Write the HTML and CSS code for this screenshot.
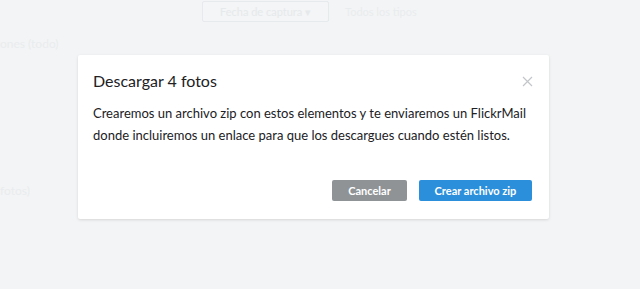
FILE: index.html
```html
<!DOCTYPE html>
<html lang="es">
<head>
  <meta charset="UTF-8">
  <title>Descargar fotos</title>
  <link rel="stylesheet" href="styles.css">
</head>
<body>
  <div class="backdrop">
    <div class="toolbar">
      <button class="filter">Fecha de captura ▾</button>
      <span class="filter-link">Todos los tipos</span>
    </div>
    <div class="side side-top">ones (todo)</div>
    <div class="side side-bottom">fotos)</div>
  </div>

  <div class="modal">
    <div class="modal-head">
      <h2>Descargar 4 fotos</h2>
      <span class="close">
        <svg width="11" height="11" viewBox="0 0 11 11"><path d="M1 1L10 10M10 1L1 10" stroke="#c3c6c9" stroke-width="1.2"/></svg>
      </span>
    </div>
    <p class="modal-text">Crearemos un archivo zip con estos elementos y te enviaremos un FlickrMail donde incluiremos un enlace para que los descargues cuando estén listos.</p>
    <div class="modal-actions">
      <button class="btn btn-cancel">Cancelar</button>
      <button class="btn btn-primary">Crear archivo zip</button>
    </div>
  </div>
</body>
</html>
```

FILE: styles.css
```css
* {
  box-sizing: border-box;
}

body {
  margin: 0;
  width: 640px;
  height: 289px;
  overflow: hidden;
  background: #f3f4f5;
  font-family: 'Lato', 'Liberation Sans', sans-serif;
  position: relative;
}

.backdrop {
  color: #e9ecee;
  font-size: 12px;
}

.toolbar {
  display: flex;
  align-items: center;
  padding: 1px 0 0 202px;
  gap: 16px;
}

.filter {
  width: 127px;
  height: 21px;
  border: 1px solid #e6eaec;
  border-radius: 2px;
  background: #f3f5f6;
  color: #e6e9eb;
  font: inherit;
  font-size: 11px;
}

.filter-link {
  font-size: 11px;
}

.side {
  position: absolute;
  left: 0;
}

.side-top {
  top: 36px;
}

.side-bottom {
  top: 183px;
}

.modal {
  position: absolute;
  left: 78px;
  top: 55px;
  width: 471px;
  height: 164px;
  background: #fff;
  border-radius: 2px;
  box-shadow: 0 1px 3px rgba(0, 0, 0, 0.12);
  padding: 16px 15px 18px 15px;
  display: flex;
  flex-direction: column;
}

.modal-head {
  display: flex;
  justify-content: space-between;
  align-items: center;
}

.modal-head h2 {
  margin: 0;
  font-size: 16px;
  font-weight: 400;
  color: #212124;
  line-height: 20px;
}

.close {
  display: flex;
  margin-right: 1px;
}

.modal-text {
  margin: 11px 0 0;
  font-size: 13px;
  line-height: 22px;
  color: #212124;
}

.modal-actions {
  margin-top: auto;
  display: flex;
  justify-content: flex-end;
  gap: 12px;
  padding-right: 2px;
}

.btn {
  height: 21px;
  border: none;
  border-radius: 2px;
  color: #fff;
  font-family: inherit;
  font-size: 11px;
  font-weight: 700;
  padding: 0;
  cursor: pointer;
}

.btn-cancel {
  width: 75px;
  background: #8f9396;
}

.btn-primary {
  width: 113px;
  background: #2b8fdc;
}
```
